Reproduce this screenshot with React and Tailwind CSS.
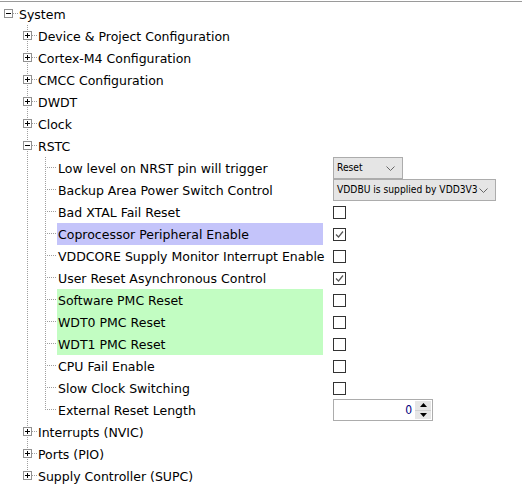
import React from 'react';

const rows = [
  { lvl: 0, label: 'System', box: 'minus' },
  { lvl: 1, label: 'Device & Project Configuration', box: 'plus' },
  { lvl: 1, label: 'Cortex-M4 Configuration', box: 'plus' },
  { lvl: 1, label: 'CMCC Configuration', box: 'plus' },
  { lvl: 1, label: 'DWDT', box: 'plus' },
  { lvl: 1, label: 'Clock', box: 'plus' },
  { lvl: 1, label: 'RSTC', box: 'minus' },
  { lvl: 2, label: 'Low level on NRST pin will trigger', kind: 'select', value: 'Reset', w: 'w-[70px]' },
  { lvl: 2, label: 'Backup Area Power Switch Control', kind: 'select', value: 'VDDBU is supplied by VDD3V3', w: 'w-[163px]' },
  { lvl: 2, label: 'Bad XTAL Fail Reset', kind: 'check' },
  { lvl: 2, label: 'Coprocessor Peripheral Enable', kind: 'check', on: true, bg: 'bg-[#c4c4fa]' },
  { lvl: 2, label: 'VDDCORE Supply Monitor Interrupt Enable', kind: 'check' },
  { lvl: 2, label: 'User Reset Asynchronous Control', kind: 'check', on: true },
  { lvl: 2, label: 'Software PMC Reset', kind: 'check', bg: 'bg-[#c2fdc2]' },
  { lvl: 2, label: 'WDT0 PMC Reset', kind: 'check', bg: 'bg-[#c2fdc2]' },
  { lvl: 2, label: 'WDT1 PMC Reset', kind: 'check', bg: 'bg-[#c2fdc2]' },
  { lvl: 2, label: 'CPU Fail Enable', kind: 'check' },
  { lvl: 2, label: 'Slow Clock Switching', kind: 'check' },
  { lvl: 2, label: 'External Reset Length', kind: 'spin', value: '0', last: true },
  { lvl: 1, label: 'Interrupts (NVIC)', box: 'plus' },
  { lvl: 1, label: 'Ports (PIO)', box: 'plus' },
  { lvl: 1, label: 'Supply Controller (SUPC)', box: 'plus', last: true },
];

const dot = { stroke: '#a0a0a0', strokeDasharray: '1 1', shapeRendering: 'crispEdges' };

function ExpandBox({ x, type }) {
  const c = x + 4.5;
  return (
    <g shapeRendering="crispEdges">
      <rect x={x + 0.5} y={6.5} width={8} height={8} fill="#fff" stroke="#919191" />
      <line x1={x + 2} x2={x + 7} y1={10.5} y2={10.5} stroke="#000" />
      {type === 'plus' && <line x1={c} x2={c} y1={8} y2={13} stroke="#000" />}
    </g>
  );
}

// dotted connector lines + expand boxes, drawn per row
function Guides({ row }) {
  if (row.lvl === 0) {
    return (
      <svg width="19" height="22" className="shrink-0">
        <line x1={13} x2={18} y1={10.5} y2={10.5} {...dot} />
        <ExpandBox x={4} type={row.box} />
      </svg>
    );
  }
  if (row.lvl === 1) {
    return (
      <svg width="38" height="22" className="shrink-0">
        <line x1={27.5} x2={27.5} y1={0} y2={row.last ? 11 : 22} {...dot} />
        <line x1={32} x2={38} y1={10.5} y2={10.5} {...dot} />
        <ExpandBox x={23} type={row.box} />
      </svg>
    );
  }
  return (
    <svg width="57" height="22" className="shrink-0">
      <line x1={27.5} x2={27.5} y1={0} y2={22} {...dot} />
      <line x1={45.5} x2={45.5} y1={0} y2={row.last ? 11 : 22} {...dot} />
      <line x1={47} x2={57} y1={10.5} y2={10.5} {...dot} />
    </svg>
  );
}

function Chevron() {
  return (
    <svg width="9" height="5" className="shrink-0">
      <polyline points="0.5,0.5 4.5,4.5 8.5,0.5" fill="none" stroke="#666" />
    </svg>
  );
}

const uiFont = { fontFamily: '"DejaVu Sans Condensed", "DejaVu Sans", sans-serif', fontStretch: 'condensed' };

function Value({ row }) {
  if (row.kind === 'select') {
    return (
      <div
        className={`${row.w} h-[22px] flex items-center justify-between pl-[3px] pr-[7px] bg-[#e5e5e5] border border-[#acacac] text-[10.2px] text-black whitespace-nowrap`}
        style={uiFont}
      >
        <span>{row.value}</span>
        <Chevron />
      </div>
    );
  }
  if (row.kind === 'check') {
    return (
      <div className="w-[13px] h-[13px] border border-[#333] bg-white flex items-center justify-center">
        {row.on && (
          <svg width="11" height="11">
            <polyline points="2,5.5 4.5,8 9,2.5" fill="none" stroke="#555" strokeWidth="1.2" />
          </svg>
        )}
      </div>
    );
  }
  return (
    <div className="w-[100px] h-[22px] flex border border-[#acacac] bg-white">
      <div className="flex-1 flex items-center justify-end pr-[3px] text-[12px] text-[#000080]" style={uiFont}>
        {row.value}
      </div>
      <div className="w-[16px] flex flex-col my-[1px] mr-[1px]">
        <div className="flex-1 flex items-center justify-center bg-[#e6e6e6] border-b border-[#d0d0d0]">
          <svg width="7" height="4"><polygon points="3.5,0 7,4 0,4" fill="#000" /></svg>
        </div>
        <div className="flex-1 flex items-center justify-center bg-[#e6e6e6]">
          <svg width="7" height="4"><polygon points="0,0 7,0 3.5,4" fill="#000" /></svg>
        </div>
      </div>
    </div>
  );
}

export default function App() {
  return (
    <div className="w-[522px] h-[499px] bg-white overflow-hidden" style={{ fontFamily: '"DejaVu Sans", Verdana, sans-serif' }}>
      <div className="mt-[1px] border-t border-[#9a9a9a] pt-[1px] text-[12.5px] text-black">
        {rows.map((row, i) => (
          <div key={i} className="h-[22px] flex items-center">
            <Guides row={row} />
            {row.lvl < 2 ? (
              <div className="h-[22px] flex items-center pt-[2px] whitespace-nowrap">{row.label}</div>
            ) : (
              <>
                <div className={`w-[266px] h-[22px] flex items-center pl-[1px] pt-[2px] whitespace-nowrap ${row.bg || ''}`}>
                  {row.label}
                </div>
                <div className="ml-[10px] flex items-center">
                  <Value row={row} />
                </div>
              </>
            )}
          </div>
        ))}
      </div>
    </div>
  );
}
